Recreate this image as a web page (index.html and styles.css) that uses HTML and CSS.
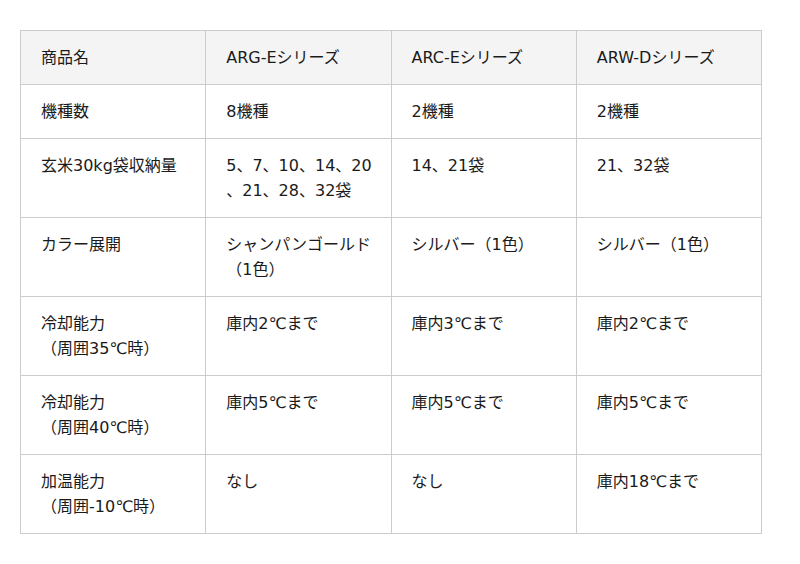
FILE: index.html
```html
<!DOCTYPE html>
<html lang="ja">
<head>
<meta charset="utf-8">
<link rel="stylesheet" href="styles.css">
</head>
<body>
<table class="spec">
  <colgroup><col><col><col><col></colgroup>
  <thead>
    <tr><th>商品名</th><th>ARG-Eシリーズ</th><th>ARC-Eシリーズ</th><th>ARW-Dシリーズ</th></tr>
  </thead>
  <tbody>
    <tr><td>機種数</td><td>8機種</td><td>2機種</td><td>2機種</td></tr>
    <tr><td>玄米30kg袋収納量</td><td>5、7、10、14、20、21、28、32袋</td><td>14、21袋</td><td>21、32袋</td></tr>
    <tr><td>カラー展開</td><td>シャンパンゴールド（1色）</td><td>シルバー（1色）</td><td>シルバー（1色）</td></tr>
    <tr><td>冷却能力<br>（周囲35℃時）</td><td>庫内2℃まで</td><td>庫内3℃まで</td><td>庫内2℃まで</td></tr>
    <tr><td>冷却能力<br>（周囲40℃時）</td><td>庫内5℃まで</td><td>庫内5℃まで</td><td>庫内5℃まで</td></tr>
    <tr><td>加温能力<br>（周囲-10℃時）</td><td>なし</td><td>なし</td><td>庫内18℃まで</td></tr>
  </tbody>
</table>
</body>
</html>
```
FILE: styles.css
```css
html, body {
  margin: 0;
  background: #fff;
}
body {
  padding: 30px 20px;
  font-family: "DejaVu Sans", "Noto Sans CJK JP", sans-serif;
  font-size: 16px;
  line-height: 25px;
  color: #1a1a1a;
}
.spec {
  width: 742px;
  border-collapse: collapse;
  table-layout: fixed;
}
.spec th,
.spec td {
  border: 1px solid #ccc;
  padding: 14px 14px 14px 20px;
  text-align: left;
  vertical-align: top;
  font-weight: normal;
  line-break: anywhere;
}
.spec th {
  background: #f4f4f4;
}
```
